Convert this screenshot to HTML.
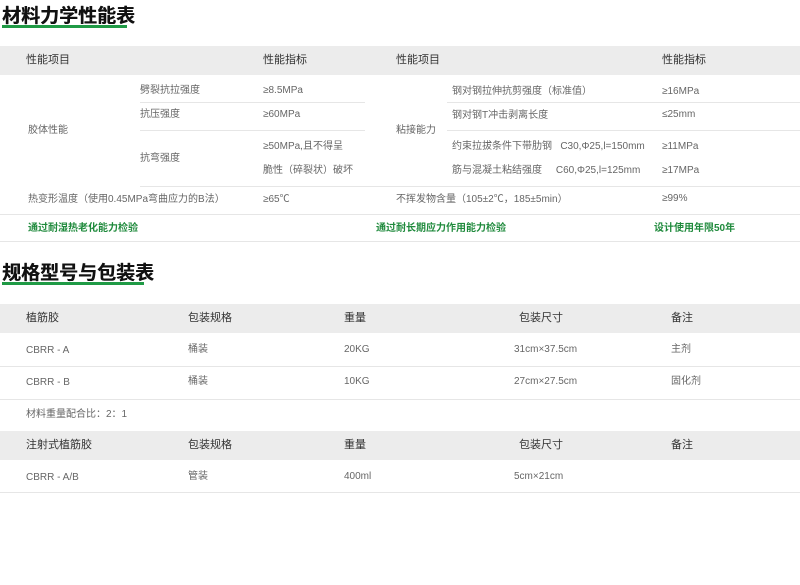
<!DOCTYPE html><html><head><meta charset="utf-8"><style>
body{margin:0;width:800px;height:585px;background:#fff;position:relative;font-family:"Liberation Sans","Noto Sans CJK SC",sans-serif;overflow:hidden}
.t{position:absolute;white-space:nowrap;font-size:10px;color:#666;line-height:12px}
.h{color:#333;font-size:11px}
.g{color:#1f8a3c;font-weight:bold}
.band{position:absolute;left:0;width:800px;background:#ececec}
.l{position:absolute;height:1px;background:#e6e6e6}
.title{position:absolute;left:2px;font-size:19px;font-weight:bold;color:#111;line-height:22px;white-space:nowrap;text-shadow:0.4px 0 0 #111}
.ul{position:absolute;height:3px;background:#1f9a45;left:2px}
</style></head><body>
<div class="ul" style="top:25px;width:125px"></div>
<div class="title" style="top:6px">材料力学性能表</div>
<div class="band" style="top:46px;height:29px"></div>
<div class="t h" style="left:26px;top:54px">性能项目</div>
<div class="t h" style="left:263px;top:54px">性能指标</div>
<div class="t h" style="left:396px;top:54px">性能项目</div>
<div class="t h" style="left:662px;top:54px">性能指标</div>

<div class="t" style="left:140px;top:85px">劈裂抗拉强度</div>
<div class="t" style="left:263px;top:85px">≥8.5MPa</div>
<div class="l" style="left:140px;width:225px;top:102px"></div>
<div class="t" style="left:140px;top:109px">抗压强度</div>
<div class="t" style="left:263px;top:109px">≥60MPa</div>
<div class="l" style="left:140px;width:225px;top:130px"></div>
<div class="t" style="left:28px;top:125px">胶体性能</div>
<div class="t" style="left:140px;top:153px">抗弯强度</div>
<div class="t" style="left:263px;top:141px">≥50MPa,且不得呈</div>
<div class="t" style="left:263px;top:165px">脆性（碎裂状）破坏</div>
<div class="l" style="left:140px;width:240px;top:186px"></div>
<div class="t" style="left:28px;top:194px">热变形温度（使用0.45MPa弯曲应力的B法）</div>
<div class="t" style="left:263px;top:194px">≥65℃</div>

<div class="t" style="left:452px;top:86px">钢对钢拉伸抗剪强度（标准值）</div>
<div class="t" style="left:662px;top:86px">≥16MPa</div>
<div class="l" style="left:447px;width:353px;top:102px"></div>
<div class="t" style="left:452px;top:110px">钢对钢T冲击剥离长度</div>
<div class="t" style="left:662px;top:109px">≤25mm</div>
<div class="l" style="left:447px;width:353px;top:130px"></div>
<div class="t" style="left:396px;top:125px">粘接能力</div>
<div class="t" style="left:452px;top:141px">约束拉拔条件下带肋钢&nbsp;&nbsp;&nbsp;C30,Φ25,l=150mm</div>
<div class="t" style="left:662px;top:141px">≥11MPa</div>
<div class="t" style="left:452px;top:165px">筋与混凝土粘结强度&nbsp;&nbsp;&nbsp;&nbsp;&nbsp;C60,Φ25,l=125mm</div>
<div class="t" style="left:662px;top:165px">≥17MPa</div>
<div class="l" style="left:380px;width:420px;top:186px"></div>
<div class="t" style="left:396px;top:194px">不挥发物含量（105±2℃，185±5min）</div>
<div class="t" style="left:662px;top:193px">≥99%</div>
<div class="l" style="left:0;width:800px;top:214px"></div>
<div class="t g" style="left:28px;top:223px">通过耐湿热老化能力检验</div>
<div class="t g" style="left:376px;top:223px">通过耐长期应力作用能力检验</div>
<div class="t g" style="left:654px;top:223px">设计使用年限50年</div>
<div class="l" style="left:0;width:800px;top:241px"></div>

<div class="ul" style="top:282px;width:142px"></div>
<div class="title" style="top:263px">规格型号与包装表</div>
<div class="band" style="top:304px;height:29px"></div>
<div class="t h" style="left:26px;top:312px">植筋胶</div>
<div class="t h" style="left:188px;top:312px">包装规格</div>
<div class="t h" style="left:344px;top:312px">重量</div>
<div class="t h" style="left:519px;top:312px">包装尺寸</div>
<div class="t h" style="left:671px;top:312px">备注</div>
<div class="t" style="left:26px;top:345px">CBRR - A</div>
<div class="t" style="left:188px;top:344px">桶装</div>
<div class="t" style="left:344px;top:344px">20KG</div>
<div class="t" style="left:514px;top:344px">31cm×37.5cm</div>
<div class="t" style="left:671px;top:344px">主剂</div>
<div class="l" style="left:0;width:800px;top:366px"></div>
<div class="t" style="left:26px;top:377px">CBRR - B</div>
<div class="t" style="left:188px;top:376px">桶装</div>
<div class="t" style="left:344px;top:376px">10KG</div>
<div class="t" style="left:514px;top:376px">27cm×27.5cm</div>
<div class="t" style="left:671px;top:376px">固化剂</div>
<div class="l" style="left:0;width:800px;top:399px"></div>
<div class="t" style="left:26px;top:409px">材料重量配合比：2：1</div>
<div class="band" style="top:431px;height:29px"></div>
<div class="t h" style="left:26px;top:439px">注射式植筋胶</div>
<div class="t h" style="left:188px;top:439px">包装规格</div>
<div class="t h" style="left:344px;top:439px">重量</div>
<div class="t h" style="left:519px;top:439px">包装尺寸</div>
<div class="t h" style="left:671px;top:439px">备注</div>
<div class="t" style="left:26px;top:472px">CBRR - A/B</div>
<div class="t" style="left:188px;top:471px">管装</div>
<div class="t" style="left:344px;top:471px">400ml</div>
<div class="t" style="left:514px;top:471px">5cm×21cm</div>
<div class="l" style="left:0;width:800px;top:492px"></div>
</body></html>
